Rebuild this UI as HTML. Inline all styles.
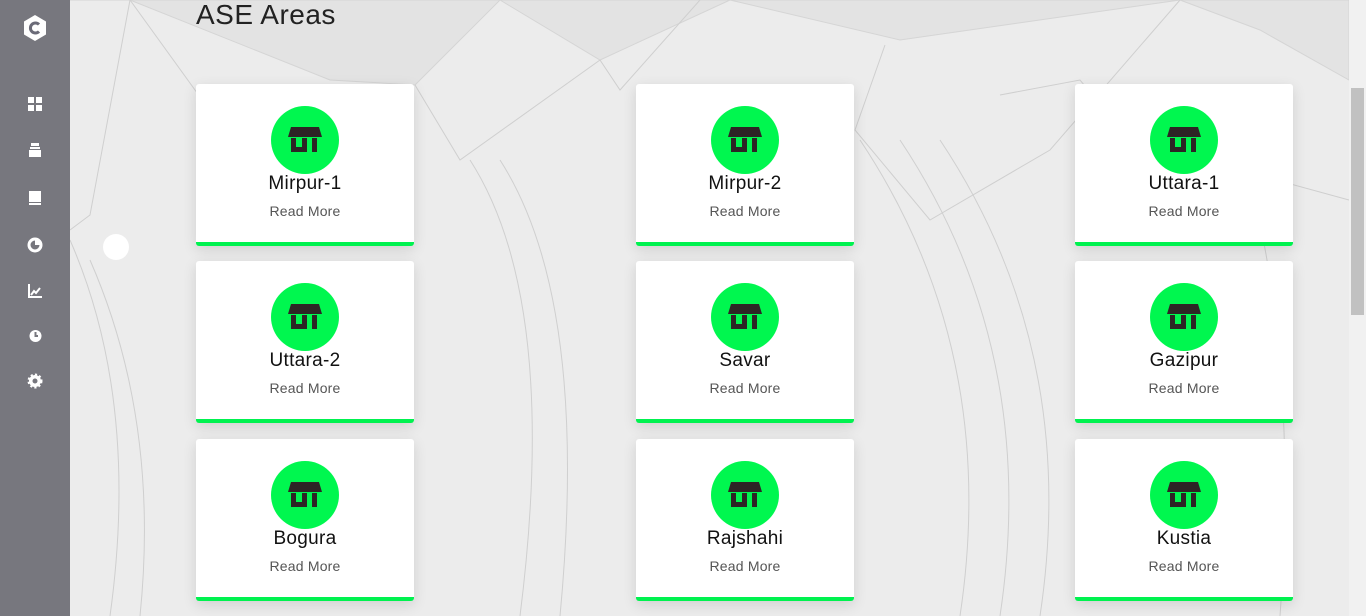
<!DOCTYPE html>
<html><head><style>
*{margin:0;padding:0;box-sizing:border-box}
body{width:1366px;height:616px;overflow:hidden;background:#ececec;font-family:"Liberation Sans",sans-serif;position:relative}
.bg{position:absolute;left:0;top:0}
.side{position:absolute;left:0;top:0;width:70px;height:616px;background:#77777e}
.ic{position:absolute;left:27px;width:16px;height:16px}
h1{position:absolute;left:196px;top:-1px;font-size:28px;font-weight:normal;color:#222;letter-spacing:0.5px}
.card{position:absolute;width:218px;height:162px;background:#fff;border-radius:3px;border-bottom:4px solid #00f24f;box-shadow:0 4px 14px rgba(0,0,0,0.12);text-align:center}
.circ{position:absolute;left:75px;top:22px;width:68px;height:68px;border-radius:50%;background:#00f74f}
.circ svg{position:absolute;left:17px;top:21px}
.nm{position:absolute;left:0;right:0;top:89px;font-size:19px;color:#111;letter-spacing:0.3px}
.rm{position:absolute;left:0;right:0;top:119px;font-size:14px;color:#555;letter-spacing:0.2px}
.sb{position:absolute;left:1349px;top:0;width:17px;height:616px;background:#f1f1f1}
.th{position:absolute;left:1351px;top:88px;width:13px;height:227px;background:#c1c1c1}
</style></head><body>
<svg class="bg" width="1366" height="616" stroke="#cfcfcf" fill="none" stroke-width="1">
<polygon points="70,0 130,0 330,80 415,85 500,0 600,60 730,0 900,40 1180,0 1260,30 1349,80 1349,0" fill="#e3e3e3" stroke="#d5d5d5"/>
<path d="M130,0 L90,215 L70,230"/><path d="M130,0 L260,180"/><path d="M415,85 L460,160 L600,60"/><path d="M600,60 L620,90 L700,0"/><path d="M885,45 L855,130 L930,220 L1050,150 L1180,0"/><path d="M1000,95 L1080,80 L1130,140 L1349,200"/>
<path d="M70,240 Q140,400 110,616"/><path d="M90,260 Q160,420 140,616"/><path d="M860,140 Q1000,350 960,616"/><path d="M900,140 Q1040,350 1000,616"/><path d="M940,140 Q1080,350 1040,616"/><path d="M1240,140 Q1300,350 1280,616"/><path d="M470,160 Q560,300 520,616"/><path d="M500,160 Q590,300 560,616"/>
<circle cx="116" cy="247" r="13" fill="#fff" stroke="none"/>
</svg>
<div class="side">
<svg style="position:absolute;left:22px;top:14px" width="26" height="28" viewBox="0 0 26 28"><polygon points="13,1 24,7.5 24,20.5 13,27 2,20.5 2,7.5" fill="#fff"/><path d="M17,10.5 A5,5 0 1 0 17,17.5" stroke="#6b6b78" stroke-width="3" fill="none"/></svg>
<svg class="ic" style="top:96px" viewBox="0 0 16 16" fill="#fff"><rect x="1" y="1" width="6" height="6"/><rect x="9" y="1" width="6" height="6"/><rect x="1" y="9" width="6" height="6"/><rect x="9" y="9" width="6" height="6"/></svg>
<svg class="ic" style="top:142px" viewBox="0 0 16 16" fill="#fff"><rect x="4" y="1" width="8" height="3"/><rect x="3" y="5" width="10" height="2"/><rect x="2" y="8" width="12" height="7"/></svg>
<svg class="ic" style="top:190px" viewBox="0 0 16 16" fill="#fff"><rect x="2" y="1" width="12" height="11"/><rect x="2" y="13" width="12" height="2"/></svg>
<svg class="ic" style="top:237px" viewBox="0 0 16 16"><circle cx="8" cy="8" r="6" stroke="#fff" stroke-width="3" fill="none"/><path d="M8,8 L8,2 A6,6 0 0 1 14,8Z" fill="#fff"/></svg>
<svg class="ic" style="top:283px" viewBox="0 0 16 16" fill="none" stroke="#fff" stroke-width="2"><path d="M2,1 V14 H15"/><path d="M4,12 L7,8 L9,10 L13,5"/></svg>
<svg class="ic" style="top:328px" viewBox="0 0 16 16"><circle cx="8.5" cy="8" r="6" fill="#fff"/><path d="M8.5,4 V8 H11" stroke="#77777e" stroke-width="2" fill="none"/></svg>
<svg class="ic" style="top:373px" viewBox="0 0 16 16"><circle cx="8" cy="8" r="6" fill="#fff" stroke="#fff" stroke-width="3" stroke-dasharray="2 2"/><circle cx="8" cy="8" r="2.5" fill="#77777e"/></svg>
</div>
<h1>ASE Areas</h1>
<div class="sb"></div><div class="th"></div>

<div class="card" style="left:196px;top:84px"><div class="circ"><svg width="34" height="25" viewBox="0 0 34 25" fill="#2d2525"><path d="M3,0 H31 L34,10 H0Z"/><path d="M3,11 H8 V20 H14 V11 H19 V25 H3Z"/><rect x="24" y="11" width="5" height="14"/></svg></div><div class="nm">Mirpur-1</div><div class="rm">Read More</div></div>
<div class="card" style="left:636px;top:84px"><div class="circ"><svg width="34" height="25" viewBox="0 0 34 25" fill="#2d2525"><path d="M3,0 H31 L34,10 H0Z"/><path d="M3,11 H8 V20 H14 V11 H19 V25 H3Z"/><rect x="24" y="11" width="5" height="14"/></svg></div><div class="nm">Mirpur-2</div><div class="rm">Read More</div></div>
<div class="card" style="left:1075px;top:84px"><div class="circ"><svg width="34" height="25" viewBox="0 0 34 25" fill="#2d2525"><path d="M3,0 H31 L34,10 H0Z"/><path d="M3,11 H8 V20 H14 V11 H19 V25 H3Z"/><rect x="24" y="11" width="5" height="14"/></svg></div><div class="nm">Uttara-1</div><div class="rm">Read More</div></div>

<div class="card" style="left:196px;top:261px"><div class="circ"><svg width="34" height="25" viewBox="0 0 34 25" fill="#2d2525"><path d="M3,0 H31 L34,10 H0Z"/><path d="M3,11 H8 V20 H14 V11 H19 V25 H3Z"/><rect x="24" y="11" width="5" height="14"/></svg></div><div class="nm">Uttara-2</div><div class="rm">Read More</div></div>
<div class="card" style="left:636px;top:261px"><div class="circ"><svg width="34" height="25" viewBox="0 0 34 25" fill="#2d2525"><path d="M3,0 H31 L34,10 H0Z"/><path d="M3,11 H8 V20 H14 V11 H19 V25 H3Z"/><rect x="24" y="11" width="5" height="14"/></svg></div><div class="nm">Savar</div><div class="rm">Read More</div></div>
<div class="card" style="left:1075px;top:261px"><div class="circ"><svg width="34" height="25" viewBox="0 0 34 25" fill="#2d2525"><path d="M3,0 H31 L34,10 H0Z"/><path d="M3,11 H8 V20 H14 V11 H19 V25 H3Z"/><rect x="24" y="11" width="5" height="14"/></svg></div><div class="nm">Gazipur</div><div class="rm">Read More</div></div>

<div class="card" style="left:196px;top:439px"><div class="circ"><svg width="34" height="25" viewBox="0 0 34 25" fill="#2d2525"><path d="M3,0 H31 L34,10 H0Z"/><path d="M3,11 H8 V20 H14 V11 H19 V25 H3Z"/><rect x="24" y="11" width="5" height="14"/></svg></div><div class="nm">Bogura</div><div class="rm">Read More</div></div>
<div class="card" style="left:636px;top:439px"><div class="circ"><svg width="34" height="25" viewBox="0 0 34 25" fill="#2d2525"><path d="M3,0 H31 L34,10 H0Z"/><path d="M3,11 H8 V20 H14 V11 H19 V25 H3Z"/><rect x="24" y="11" width="5" height="14"/></svg></div><div class="nm">Rajshahi</div><div class="rm">Read More</div></div>
<div class="card" style="left:1075px;top:439px"><div class="circ"><svg width="34" height="25" viewBox="0 0 34 25" fill="#2d2525"><path d="M3,0 H31 L34,10 H0Z"/><path d="M3,11 H8 V20 H14 V11 H19 V25 H3Z"/><rect x="24" y="11" width="5" height="14"/></svg></div><div class="nm">Kustia</div><div class="rm">Read More</div></div>
</body></html>
